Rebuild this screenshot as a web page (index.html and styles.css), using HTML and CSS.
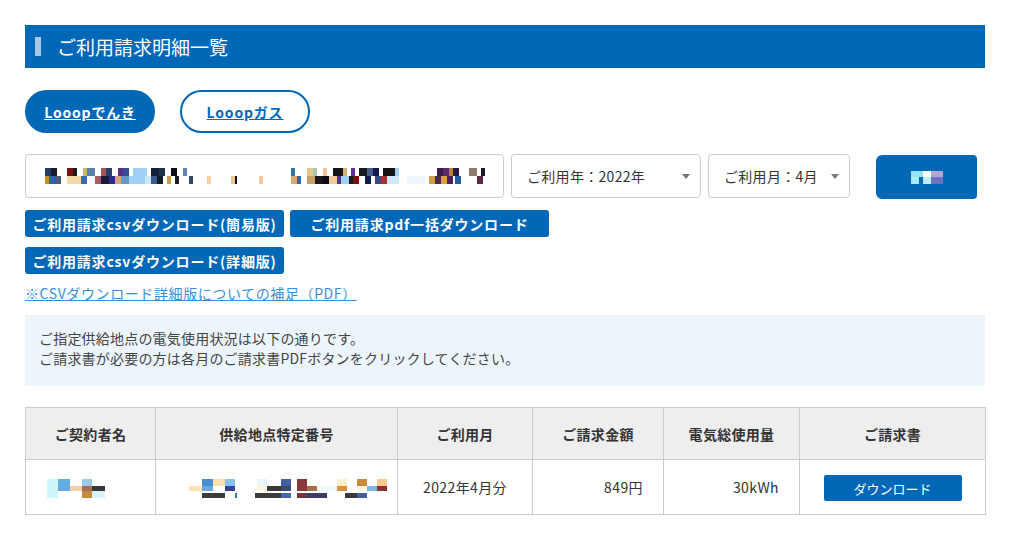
FILE: index.html
```html
<!DOCTYPE html>
<html lang="ja">
<head>
    <meta charset="UTF-8">
    <title>ご利用請求明細一覧</title>
    <link rel="stylesheet" href="styles.css">
</head>
<body>
    <div class="page">
        <h1 class="page-title"><span class="title-mark"></span>ご利用請求明細一覧</h1>

        <!-- サービス切替 -->
        <div class="tabs">
            <a href="#" class="tab tab-active">Looopでんき</a>
            <a href="#" class="tab">Looopガス</a>
        </div>

        <!-- 検索条件 -->
        <div class="search-row">
            <div class="address-box">
                <span class="mosaic mosaic-addr1"></span>
                <span class="mosaic mosaic-addr2"></span>
                <span class="mosaic mosaic-addr3"></span>
                <span class="mosaic mosaic-addr4"></span>
            </div>
            <div class="select-wrap select-year">
                <select class="select">
                    <option>ご利用年：2022年</option>
                </select>
            </div>
            <div class="select-wrap select-month">
                <select class="select">
                    <option>ご利用月：4月</option>
                </select>
            </div>
            <button class="search-btn"><span class="mosaic mosaic-btn"></span></button>
        </div>

        <!-- ダウンロード -->
        <div class="dl-buttons">
            <button class="dl-btn">ご利用請求csvダウンロード(簡易版)</button>
            <button class="dl-btn">ご利用請求pdf一括ダウンロード</button>
            <button class="dl-btn">ご利用請求csvダウンロード(詳細版)</button>
        </div>
        <a href="#" class="note-link">※CSVダウンロード詳細版についての補足（PDF）</a>

        <div class="info-box">
            <p>ご指定供給地点の電気使用状況は以下の通りです。</p>
            <p>ご請求書が必要の方は各月のご請求書PDFボタンをクリックしてください。</p>
        </div>

        <table class="bill-table">
            <thead>
                <tr>
                    <th class="col-name">ご契約者名</th>
                    <th class="col-point">供給地点特定番号</th>
                    <th class="col-month">ご利用月</th>
                    <th class="col-amount">ご請求金額</th>
                    <th class="col-usage">電気総使用量</th>
                    <th class="col-invoice">ご請求書</th>
                </tr>
            </thead>
            <tbody>
                <tr>
                    <td class="masked"><span class="mosaic mosaic-name"></span></td>
                    <td class="masked"><span class="mosaic mosaic-point"></span></td>
                    <td class="center">2022年4月分</td>
                    <td class="num">849円</td>
                    <td class="num">30kWh</td>
                    <td class="center"><button class="pdf-btn">ダウンロード</button></td>
                </tr>
            </tbody>
        </table>
    </div>
</body>
</html>
```

FILE: styles.css
```css
body {
    margin: 0;
    font-family: "Noto Sans CJK JP", "Noto Sans", sans-serif;
    color: #333;
    background-color: #fff;
}
.page {
    width: 960px;
    padding: 25px 0 0 25px;
}
.page-title {
    display: flex;
    align-items: center;
    height: 43px;
    margin: 0;
    padding-left: 10px;
    background-color: #0068b7;
    color: #fff;
    font-size: 19px;
    font-weight: normal;
}
.title-mark {
    width: 6px;
    height: 19px;
    margin-right: 16px;
    background-color: #a7c9e8;
}

/* tabs */
.tabs {
    display: flex;
    gap: 25px;
    margin-top: 22px;
}
.tab {
    display: flex;
    align-items: center;
    justify-content: center;
    box-sizing: border-box;
    width: 130px;
    height: 43px;
    border: 2px solid #0068b7;
    border-radius: 22px;
    color: #0068b7;
    font-size: 14px;
    font-weight: bold;
    letter-spacing: 0.8px;
    text-decoration: underline;
}
.tab-active {
    background-color: #0068b7;
    color: #fff;
}

/* search */
.search-row {
    display: flex;
    align-items: flex-start;
    margin-top: 21px;
}
.address-box {
    display: flex;
    align-items: center;
    box-sizing: border-box;
    width: 479px;
    height: 44px;
    padding-left: 13px;
    border: 1px solid #ccc;
    border-radius: 4px;
}
.select-wrap {
    position: relative;
    margin-left: 7px;
}
.select-wrap::after {
    content: "";
    position: absolute;
    top: 20px;
    right: 11px;
    border-left: 4px solid transparent;
    border-right: 4px solid transparent;
    border-top: 5px solid #777;
    pointer-events: none;
}
.select {
    -webkit-appearance: none;
    appearance: none;
    box-sizing: border-box;
    height: 44px;
    padding: 0 0 0 15px;
    border: 1px solid #ccc;
    border-radius: 4px;
    background-color: #fff;
    color: #333;
    font-family: inherit;
    font-size: 14px;
    letter-spacing: 0.3px;
}
.select-year .select {
    width: 190px;
}
.select-month .select {
    width: 142px;
}
.search-btn {
    display: flex;
    align-items: center;
    justify-content: center;
    width: 101px;
    height: 44px;
    margin: 1px 0 0 26px;
    border: none;
    border-radius: 6px 4px 4px 6px;
    background-color: #0068b7;
}

/* mosaic (masked personal data) */
.mosaic {
    display: inline-block;
    height: 16px;
}
.mosaic-addr1 {
    width: 158px;
    background:
        linear-gradient(to right, #fff 0 6px, #233a6a 6px 12px, #1a1a2a 12px 18px, #fff 18px 28px, #7a1212 28px 34px, #1a1a1a 34px 38px, #fff 38px 44px, #d0b070 44px 48px, #5a7fa8 48px 56px, #fff 56px 62px, #a05656 62px 67px, #284070 67px 73px, #fff 73px 79px, #5b2e8a 79px 84px, #3a4d90 84px 90px, #fff 90px 94px, #9fd0f6 94px 108px, #fff 108px 112px, #16213a 112px 120px, #20304a 120px 126px, #fff 126px 132px, #0e0e1e 132px 138px, #fff 138px 144px, #5e86b4 144px 148px, #fff 148px 158px) top / 100% 8px no-repeat,
        linear-gradient(to right, #fff 0 6px, #c98a2e 6px 10px, #2e64a8 10px 16px, #4a5a7a 16px 22px, #fff 22px 28px, #f2d9a8 28px 42px, #3c6ba6 42px 48px, #fff 48px 56px, #a36060 56px 62px, #1a1a3a 62px 70px, #2c2c8a 70px 76px, #d8a870 76px 82px, #6c96c6 82px 90px, #9fd0f6 90px 106px, #cde8fa 106px 112px, #3c5c8a 112px 118px, #101a30 118px 124px, #fff 124px 128px, #c9a040 128px 132px, #fff 132px 136px, #1c1c2c 136px 140px, #fff 140px 150px, #2a4a6a 150px 154px, #fff 154px 158px) bottom / 100% 8px no-repeat;
}
.mosaic-addr2 {
    width: 76px;
    background:
        linear-gradient(to right, #fff 0 10px, #f3d2a0 10px 14px, #fff 14px 34px, #f2c594 34px 38px, #141414 38px 40px, #fff 40px 62px, #f4c899 62px 66px, #fff 66px 76px) bottom / 100% 8px no-repeat;
}
.mosaic-addr3 {
    width: 116px;
    margin-left: 14px;
    background:
        linear-gradient(to right, #fff 0 4px, #3470b0 4px 8px, #fff 8px 20px, #e8c48a 20px 26px, #a8c8a8 26px 30px, #fff 30px 36px, #f0c694 36px 40px, #fff 40px 46px, #141414 46px 56px, #d8b070 56px 60px, #fff 60px 64px, #6030a0 64px 68px, #fff 68px 72px, #1a1a1a 72px 80px, #4a5a8a 80px 86px, #101a50 86px 92px, #fff 92px 96px, #141414 96px 108px, #9fd0f6 108px 112px, #fff 112px 116px) top / 100% 8px no-repeat,
        linear-gradient(to right, #fff 0 4px, #d8a870 4px 10px, #2c66a8 10px 14px, #fff 14px 20px, #c8a068 20px 28px, #1a1a1a 28px 36px, #0c0c1c 36px 42px, #f2cc98 42px 50px, #5a3090 50px 54px, #9fd0f6 54px 62px, #1a1a1a 62px 66px, #7a1010 66px 72px, #fff 72px 78px, #111a4a 78px 84px, #fff 84px 88px, #3a4a80 88px 94px, #aa3030 94px 100px, #cde8fa 100px 112px, #fff 112px 116px) bottom / 100% 8px no-repeat;
}
.mosaic-addr4 {
    width: 82px;
    margin-left: 4px;
    background:
        linear-gradient(to right, #fff 0 30px, #3a1f4a 30px 36px, #5a2a6a 36px 42px, #c08030 42px 46px, #281848 46px 52px, #fff 52px 62px, #8a7a6a 62px 70px, #fff 70px 74px, #1a1a2a 74px 78px, #fff 78px 82px) top / 100% 8px no-repeat,
        linear-gradient(to right, #eef7fc 0 18px, #fff 18px 22px, #d0a040 22px 28px, #4a2a4a 28px 34px, #e0a040 34px 40px, #4a2060 40px 46px, #fff 46px 48px, #2060a0 48px 54px, #fff 54px 70px, #5a2a4a 70px 76px, #fff 76px 82px) bottom / 100% 8px no-repeat;
}
.mosaic-btn {
    width: 32px;
    height: 13px;
    background:
        linear-gradient(to right, #96e0f8 0 12px, #fff 12px 20px, #b0a8d0 20px 32px) top / 100% 6px no-repeat,
        linear-gradient(to right, #a8eaf8 0 8px, #0068b7 8px 12px, #b8f0fa 12px 20px, #7070c0 20px 32px) bottom / 100% 7px no-repeat;
}
.mosaic-name {
    width: 58px;
    height: 19px;
    background:
        linear-gradient(to right, #cdf7fc 0 11px, #64ace2 11px 23px, #fff 23px 35px, #9ccbeb 35px 45px, #fff 45px 58px) top / 100% 7px no-repeat,
        linear-gradient(to right, #cdf7fc 0 11px, #64ace2 11px 23px, #f8d0a0 23px 35px, #a87050 35px 45px, #383838 45px 58px) center / 100% 5px no-repeat,
        linear-gradient(to right, #cdf7fc 0 11px, #fff 11px 35px, #c88c40 35px 45px, #d8f4f8 45px 58px) bottom / 100% 7px no-repeat;
}
.mosaic-point {
    width: 210px;
    height: 19px;
    background:
        linear-gradient(to right, #fff 0 25px, #4a90d0 25px 36px, #fae0b0 36px 48px, #88c0f0 48px 58px, #fff 58px 80px, #e8f6fc 80px 90px, #fff 90px 104px, #4060a0 104px 114px, #fff 114px 120px, #8a3838 120px 130px, #fff 130px 140px, #fff 140px 160px, #fbf0c8 160px 170px, #fff 170px 180px, #c88c40 180px 190px, #fff 190px 200px, #f8cc90 200px 210px) top / 100% 7px no-repeat,
        linear-gradient(to right, #fff 0 12px, #fbe3b8 12px 25px, #6aa8e0 25px 36px, #fff 36px 48px, #384098 48px 58px, #fff 58px 78px, #fdf6e0 78px 90px, #383838 90px 104px, #384a70 104px 114px, #fff 114px 120px, #8a3838 120px 130px, #a87048 130px 140px, #eefafc 140px 160px, #d8943c 160px 170px, #fff 170px 180px, #fff8e0 180px 190px, #7ab8e8 190px 200px, #8c3434 200px 210px) center / 100% 6px no-repeat,
        linear-gradient(to right, #fff 0 25px, #3c3c3c 25px 48px, #fff 48px 58px, #4070b0 58px 60px, #fff 60px 78px, #3c3c3c 78px 104px, #4468a8 104px 114px, #fff 114px 120px, #6c3838 120px 130px, #3c3c6c 130px 150px, #fff 150px 168px, #3a3a3a 168px 180px, #4060a0 180px 190px, #fff 190px 210px) bottom / 100% 5px no-repeat;
}

/* download buttons */
.dl-buttons {
    display: flex;
    flex-wrap: wrap;
    gap: 10px 6px;
    width: 530px;
    margin-top: 11px;
}
.dl-btn {
    width: 259px;
    height: 27px;
    padding: 0;
    border: none;
    border-radius: 3px;
    background-color: #0068b7;
    color: #fff;
    font-family: inherit;
    font-size: 14px;
    font-weight: bold;
    letter-spacing: 0.8px;
}
.note-link {
    display: inline-block;
    margin-top: 9px;
    color: #3b8fda;
    font-size: 14px;
    line-height: 20px;
    letter-spacing: 0.6px;
    text-decoration: underline;
}

/* info */
.info-box {
    margin-top: 11px;
    padding: 13px 14px 18px;
    background-color: #edf5fc;
    color: #444;
    font-size: 14px;
    line-height: 20px;
    letter-spacing: 0.2px;
}
.info-box p {
    margin: 0;
}

/* table */
.bill-table {
    width: 960px;
    margin-top: 21px;
    border-collapse: collapse;
    table-layout: fixed;
    font-size: 14px;
}
.bill-table th,
.bill-table td {
    box-sizing: border-box;
    border: 1px solid #ccc;
    padding: 0;
}
.bill-table th {
    height: 52px;
    background-color: #eee;
    color: #333;
    font-weight: bold;
    letter-spacing: 0.3px;
}
.bill-table td {
    height: 55px;
    color: #333;
    letter-spacing: 0.4px;
}
.col-name { width: 130px; }
.col-point { width: 242px; }
.col-month { width: 135px; }
.col-amount { width: 131px; }
.col-usage { width: 136px; }
.col-invoice { width: 186px; }
.bill-table .center {
    text-align: center;
}
.bill-table .masked {
    padding-left: 21px;
}
.bill-table .num {
    padding-right: 20px;
    text-align: right;
}
.bill-table td .mosaic {
    vertical-align: middle;
}
.pdf-btn {
    width: 138px;
    height: 26px;
    margin-top: 2px;
    border: none;
    border-radius: 2px;
    background-color: #0068b7;
    color: #fff;
    font-family: inherit;
    font-size: 13px;
}
```
